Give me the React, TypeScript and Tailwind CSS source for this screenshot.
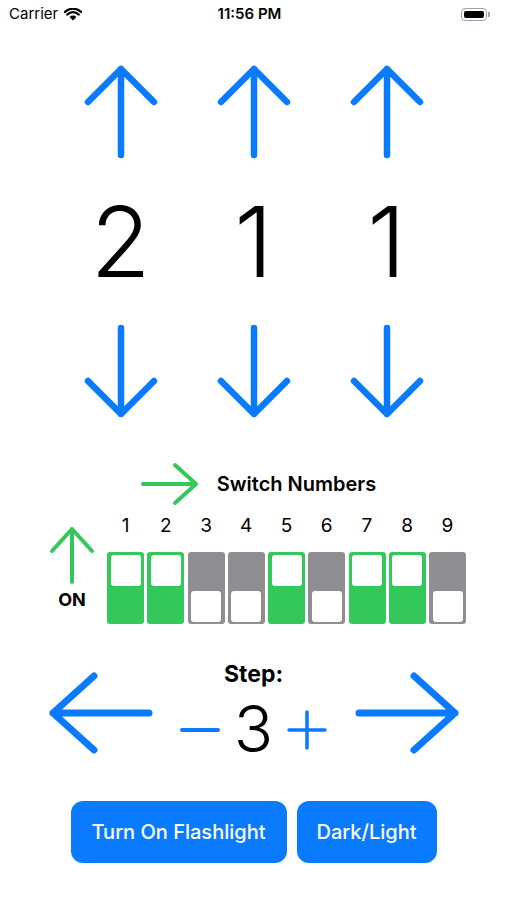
import React from "react";

const BLUE = "#0a7aff";
const GREEN = "#34c759";

function UpArrow() {
  return (
    <svg width="76" height="94" viewBox="0 0 76 94" fill="none">
      <path d="M38 90 L38 4 M5 37 L38 4 L71 37" stroke={BLUE} strokeWidth="6.5" strokeLinecap="round" strokeLinejoin="round" />
    </svg>
  );
}

function DownArrow() {
  return (
    <svg width="76" height="94" viewBox="0 0 76 94" fill="none">
      <path d="M38 4 L38 90 M5 57 L38 90 L71 57" stroke={BLUE} strokeWidth="6.5" strokeLinecap="round" strokeLinejoin="round" />
    </svg>
  );
}

function LeftArrow() {
  return (
    <svg width="104" height="84" viewBox="0 0 104 84" fill="none">
      <path d="M100 42 L4 42 M45 5 L4 42 L45 79" stroke={BLUE} strokeWidth="7" strokeLinecap="round" strokeLinejoin="round" />
    </svg>
  );
}

function RightArrow() {
  return (
    <svg width="104" height="84" viewBox="0 0 104 84" fill="none">
      <path d="M4 42 L100 42 M59 5 L100 42 L59 79" stroke={BLUE} strokeWidth="7" strokeLinecap="round" strokeLinejoin="round" />
    </svg>
  );
}

function Wifi() {
  return (
    <svg width="18" height="13" viewBox="0 0 18 13" fill="none">
      <path d="M9 12.5 L5.6 9 A4.8 4.8 0 0 1 12.4 9 Z" fill="#000" />
      <path d="M3.3 6.6 A8 8 0 0 1 14.7 6.6" stroke="#000" strokeWidth="2.2" strokeLinecap="round" />
      <path d="M1 3.9 A11.5 11.5 0 0 1 17 3.9" stroke="#000" strokeWidth="2.2" strokeLinecap="round" />
    </svg>
  );
}

const digits = [2, 1, 1];
const switches = [true, true, false, false, true, false, true, true, false];

export default function App() {
  return (
    <div className="w-[507px] h-[900px] bg-white overflow-hidden" style={{ fontFamily: "Inter, 'Noto Sans', sans-serif" }}>
      {/* status bar */}
      <div className="h-[28px] flex items-center px-[9px] text-[15px] text-black">
        <div className="flex-1 flex items-center gap-[6px]">
          <span className="font-normal">Carrier</span>
          <Wifi />
        </div>
        <div className="font-semibold">11:56 PM</div>
        <div className="flex-1 flex justify-end items-center pr-[8px]">
          <div className="w-[26px] h-[13px] rounded-[4px] border border-gray-400 p-[2px]">
            <div className="w-full h-full rounded-[2px] bg-black" />
          </div>
          <div className="w-[2px] h-[5px] rounded-r-[1px] bg-gray-400 ml-[1px]" />
        </div>
      </div>

      {/* digit pickers */}
      <div className="mt-[37px] flex justify-center">
        {digits.map((d, i) => (
          <div key={i} className="w-[133px] flex flex-col items-center">
            <UpArrow />
            <div className="h-[165px] flex items-center justify-center text-[98px] font-light leading-none text-black">{d}</div>
            <DownArrow />
          </div>
        ))}
      </div>

      {/* switch numbers header */}
      <div className="mt-[44px] h-[44px] flex items-center justify-center gap-[18px] pl-[10px]">
        <svg width="58" height="44" viewBox="0 0 58 44" fill="none">
          <path d="M2 22 L55 22 M34 3 L55 22 L34 41" stroke={GREEN} strokeWidth="4" strokeLinecap="round" strokeLinejoin="round" />
        </svg>
        <span className="text-[20px] font-semibold text-black">Switch Numbers</span>
      </div>

      {/* switches */}
      <div className="flex pl-[48px]">
        <div className="w-[48px] mt-[20px] flex flex-col items-center">
          <svg width="48" height="60" viewBox="0 0 48 60" fill="none">
            <path d="M24 56 L24 3 M4 25 L24 3 L44 25" stroke={GREEN} strokeWidth="4" strokeLinecap="round" strokeLinejoin="round" />
          </svg>
          <span className="mt-[4px] text-[18px] leading-[20px] font-bold text-black">ON</span>
        </div>
        <div className="ml-[11px] mt-[7px] flex flex-col">
          <div className="flex gap-[3.25px] h-[24px]">
            {switches.map((_, i) => (
              <div key={i} className="w-[37px] flex items-center justify-center text-[19px] leading-none text-black">{i + 1}</div>
            ))}
          </div>
          <div className="mt-[15px] flex gap-[3.25px]">
            {switches.map((on, i) => (
              <div
                key={i}
                className={
                  on
                    ? "w-[37px] h-[72px] rounded-[3px] bg-[#34c759] flex flex-col justify-start px-[3.5px] pt-[3px] pb-[2px]"
                    : "w-[37px] h-[72px] rounded-[3px] bg-[#8e8e93] flex flex-col justify-end px-[3.5px] pt-[3px] pb-[2px]"
                }
              >
                <div className="w-full h-[31px] rounded-[3px] bg-white" />
              </div>
            ))}
          </div>
        </div>
      </div>

      {/* step */}
      <div className="mt-[40px] flex justify-center items-center">
        <LeftArrow />
        <div className="w-[202px] flex flex-col items-center">
          <div className="text-[23px] leading-[21px] font-bold text-black">Step:</div>
          <div className="mt-[11px] flex items-center">
            <svg width="40" height="6" viewBox="0 0 40 6" className="mt-[2px]">
              <path d="M2 3 L38 3" stroke={BLUE} strokeWidth="4" strokeLinecap="round" />
            </svg>
            <div className="mx-[14px] text-[65px] leading-none font-light text-black">3</div>
            <svg width="40" height="40" viewBox="0 0 40 40" className="mt-[2px]">
              <path d="M2 20 L38 20 M20 2 L20 38" stroke={BLUE} strokeWidth="3.5" strokeLinecap="round" />
            </svg>
          </div>
        </div>
        <RightArrow />
      </div>

      {/* buttons */}
      <div className="mt-[40px] flex justify-center gap-[10px]">
        <button className="w-[216px] h-[62px] rounded-[12px] bg-[#0a7aff] text-white text-[20px] font-medium">Turn On Flashlight</button>
        <button className="w-[140px] h-[62px] rounded-[12px] bg-[#0a7aff] text-white text-[20px] font-medium">Dark/Light</button>
      </div>
    </div>
  );
}
